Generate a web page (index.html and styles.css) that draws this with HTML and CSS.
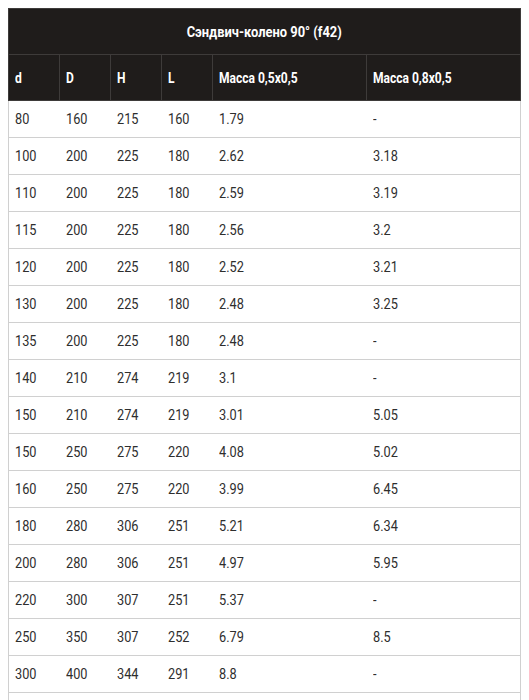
FILE: index.html
```html
<!DOCTYPE html>
<html lang="ru">
<head>
<meta charset="utf-8">
<link rel="stylesheet" href="styles.css">
</head>
<body>
<table class="spec">
  <colgroup>
    <col class="c-s"><col class="c-s"><col class="c-s"><col class="c-s"><col class="c-w"><col class="c-w">
  </colgroup>
  <thead>
    <tr class="title-row"><th colspan="6"><span class="cond">Сэндвич-колено 90° (f42)</span></th></tr>
    <tr class="head-row">
      <th><span class="cond">d</span></th>
      <th><span class="cond">D</span></th>
      <th><span class="cond">H</span></th>
      <th><span class="cond">L</span></th>
      <th><span class="cond">Масса 0,5x0,5</span></th>
      <th><span class="cond">Масса 0,8x0,5</span></th>
    </tr>
  </thead>
  <tbody>
    <tr><td><span class="n">80</span></td><td><span class="n">160</span></td><td><span class="n">215</span></td><td><span class="n">160</span></td><td><span class="n">1.79</span></td><td><span class="n">-</span></td></tr>
    <tr><td><span class="n">100</span></td><td><span class="n">200</span></td><td><span class="n">225</span></td><td><span class="n">180</span></td><td><span class="n">2.62</span></td><td><span class="n">3.18</span></td></tr>
    <tr><td><span class="n">110</span></td><td><span class="n">200</span></td><td><span class="n">225</span></td><td><span class="n">180</span></td><td><span class="n">2.59</span></td><td><span class="n">3.19</span></td></tr>
    <tr><td><span class="n">115</span></td><td><span class="n">200</span></td><td><span class="n">225</span></td><td><span class="n">180</span></td><td><span class="n">2.56</span></td><td><span class="n">3.2</span></td></tr>
    <tr><td><span class="n">120</span></td><td><span class="n">200</span></td><td><span class="n">225</span></td><td><span class="n">180</span></td><td><span class="n">2.52</span></td><td><span class="n">3.21</span></td></tr>
    <tr><td><span class="n">130</span></td><td><span class="n">200</span></td><td><span class="n">225</span></td><td><span class="n">180</span></td><td><span class="n">2.48</span></td><td><span class="n">3.25</span></td></tr>
    <tr><td><span class="n">135</span></td><td><span class="n">200</span></td><td><span class="n">225</span></td><td><span class="n">180</span></td><td><span class="n">2.48</span></td><td><span class="n">-</span></td></tr>
    <tr><td><span class="n">140</span></td><td><span class="n">210</span></td><td><span class="n">274</span></td><td><span class="n">219</span></td><td><span class="n">3.1</span></td><td><span class="n">-</span></td></tr>
    <tr><td><span class="n">150</span></td><td><span class="n">210</span></td><td><span class="n">274</span></td><td><span class="n">219</span></td><td><span class="n">3.01</span></td><td><span class="n">5.05</span></td></tr>
    <tr><td><span class="n">150</span></td><td><span class="n">250</span></td><td><span class="n">275</span></td><td><span class="n">220</span></td><td><span class="n">4.08</span></td><td><span class="n">5.02</span></td></tr>
    <tr><td><span class="n">160</span></td><td><span class="n">250</span></td><td><span class="n">275</span></td><td><span class="n">220</span></td><td><span class="n">3.99</span></td><td><span class="n">6.45</span></td></tr>
    <tr><td><span class="n">180</span></td><td><span class="n">280</span></td><td><span class="n">306</span></td><td><span class="n">251</span></td><td><span class="n">5.21</span></td><td><span class="n">6.34</span></td></tr>
    <tr><td><span class="n">200</span></td><td><span class="n">280</span></td><td><span class="n">306</span></td><td><span class="n">251</span></td><td><span class="n">4.97</span></td><td><span class="n">5.95</span></td></tr>
    <tr><td><span class="n">220</span></td><td><span class="n">300</span></td><td><span class="n">307</span></td><td><span class="n">251</span></td><td><span class="n">5.37</span></td><td><span class="n">-</span></td></tr>
    <tr><td><span class="n">250</span></td><td><span class="n">350</span></td><td><span class="n">307</span></td><td><span class="n">252</span></td><td><span class="n">6.79</span></td><td><span class="n">8.5</span></td></tr>
    <tr><td><span class="n">300</span></td><td><span class="n">400</span></td><td><span class="n">344</span></td><td><span class="n">291</span></td><td><span class="n">8.8</span></td><td><span class="n">-</span></td></tr>
    <tr class="spare"><td></td><td></td><td></td><td></td><td></td><td></td></tr>
  </tbody>
</table>
</body>
</html>
```
FILE: styles.css
```css
html, body {
  margin: 0;
  padding: 0;
  background: #fff;
}
body {
  padding: 8px;
  font-family: Roboto, "Liberation Sans", sans-serif;
  color: #222;
}
.spec {
  width: 513px;
  border-collapse: collapse;
  table-layout: fixed;
  font-size: 14px;
}
.c-s { width: 51px; }
.c-w { width: 154px; }
.spec th {
  background: #1f1c1b;
  color: #fff;
  font-weight: 700;
  text-align: left;
  padding: 0 6px;
  border: 1px solid #3e3b3a;
}
.title-row th {
  height: 45px;
  text-align: center;
  font-size: 15px;
}
.head-row th {
  height: 45px;
}
.cond {
  display: inline-block;
  transform: scaleX(0.86);
  transform-origin: left center;
  white-space: nowrap;
}
.title-row .cond {
  transform-origin: center center;
}
.spec td {
  height: 36px;
  padding: 0 6px;
  border: 1px solid #d0d0d0;
  border-left: none;
  border-right: none;
  color: #2e2e2e;
}
.spec td:first-child { border-left: 1px solid #d0d0d0; }
.spec td:last-child { border-right: 1px solid #d0d0d0; }
.n {
  display: inline-block;
  font-size: 15px;
  transform: scaleX(0.85);
  transform-origin: left center;
  white-space: nowrap;
}
```
